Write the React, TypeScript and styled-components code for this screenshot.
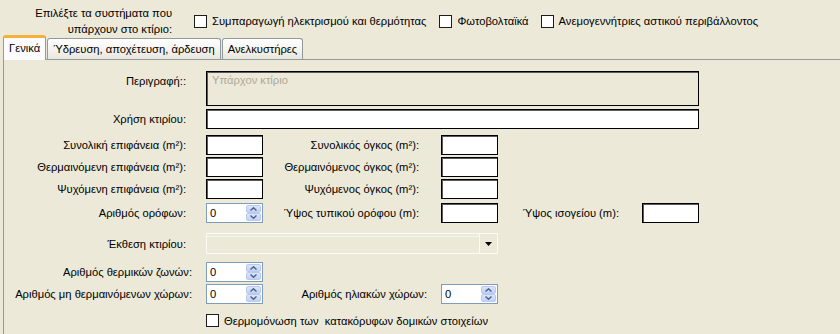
import React from 'react';
import styled, { createGlobalStyle } from 'styled-components';

const GlobalStyle = createGlobalStyle`
  html, body {
    margin: 0;
    padding: 0;
    background: #ece9d8;
  }
  body {
    font-family: "Liberation Sans", Arial, sans-serif;
    font-size: 11.2px;
    color: #000;
  }
`;

const Window = styled.div`
  width: 840px;
  height: 334px;
  overflow: hidden;
  background: #ece9d8;
`;

const Header = styled.div`
  display: flex;
  align-items: center;
  height: 37px;
  padding-top: 5px;
  box-sizing: border-box;
`;

const HeaderLabel = styled.div`
  width: 172px;
  text-align: right;
  line-height: 16px;
  margin-right: 22px;
`;

const CheckItem = styled.label<{ $mr?: number; $ml?: number }>`
  display: flex;
  align-items: center;
  gap: 5px;
  margin-right: ${p => p.$mr ?? 0}px;
  margin-left: ${p => p.$ml ?? 0}px;
  white-space: nowrap;
`;

const CheckBox = styled.span`
  width: 13px;
  height: 13px;
  box-sizing: border-box;
  border: 1px solid #1c1c1c;
  background: #fff;
  flex: none;
`;

const TabStrip = styled.div`
  display: flex;
  align-items: flex-end;
  height: 24px;
  margin: -2px 0 0 3px;
  border-bottom: 1px solid #919b9c;
`;

const Tab = styled.div<{ $active?: boolean }>`
  display: flex;
  align-items: center;
  box-sizing: border-box;
  padding: 0 5px;
  margin-right: 1px;
  white-space: nowrap;
  border: 1px solid #919b9c;
  border-bottom: none;
  border-radius: 3px 3px 0 0;
  height: ${p => (p.$active ? 25 : 21)}px;
  margin-bottom: ${p => (p.$active ? -1 : 0)}px;
  padding-bottom: ${p => (p.$active ? 2 : 0)}px;
  border-top: ${p => (p.$active ? '3px solid #f5b03c' : '1px solid #919b9c')};
  background: ${p =>
    p.$active ? '#fcfcfe' : 'linear-gradient(#ffffff, #f3f2ec 60%, #e8e6dc)'};
`;

const Panel = styled.div`
  margin-left: 3px;
  border-left: 1px solid #919b9c;
  height: 280px;
  padding-top: 11px;
  box-sizing: border-box;
`;

const Row = styled.div<{ $mt: number; $top?: boolean }>`
  display: flex;
  align-items: ${p => (p.$top ? 'flex-start' : 'center')};
  margin-top: ${p => p.$mt}px;
`;

const Label = styled.span<{ $w: number; $pt?: number }>`
  width: ${p => p.$w}px;
  flex: none;
  text-align: right;
  white-space: nowrap;
  padding-top: ${p => p.$pt ?? 0}px;
`;

const TextBox = styled.div<{ $w: number; $ml: number; $h?: number; $disabled?: boolean }>`
  width: ${p => p.$w}px;
  height: ${p => p.$h ?? 20}px;
  margin-left: ${p => p.$ml}px;
  flex: none;
  box-sizing: border-box;
  border: 1px solid #000;
  box-shadow: inset 1px 1px 0 #5a5a5a;
  background: ${p => (p.$disabled ? '#ece9d8' : '#fff')};
  color: #aca899;
  padding: 2px 0 0 5px;
`;

const SpinBox = styled.div<{ $ml: number }>`
  display: flex;
  align-items: stretch;
  width: 57px;
  height: 20px;
  margin-left: ${p => p.$ml}px;
  box-sizing: border-box;
  border: 1px solid #7f9db9;
  background: #fff;
  padding: 1px;
`;

const SpinValue = styled.span`
  flex: 1;
  padding-left: 2px;
  line-height: 16px;
`;

const SpinButtons = styled.div`
  display: flex;
  flex-direction: column;
  width: 15px;
`;

const SpinArrow = styled.div`
  flex: 1;
  display: flex;
  align-items: center;
  justify-content: center;
  background: linear-gradient(#dbe5fb, #c1d1f7);
  border-radius: 2px;
  border: 1px solid #b9c9ef;
  box-sizing: border-box;
`;

const Combo = styled.div<{ $w: number; $ml: number }>`
  display: flex;
  width: ${p => p.$w}px;
  height: 21px;
  margin-left: ${p => p.$ml}px;
  box-sizing: border-box;
  border: 1px solid #fbfaf6;
  background: #ece9d8;
`;

const ComboBody = styled.div`
  flex: 1;
  margin: 2px 0;
  border-top: 1px solid #f5f4ee;
`;

const ComboButton = styled.div`
  width: 17px;
  display: flex;
  align-items: center;
  justify-content: center;
  border-left: 1px solid #fbfaf6;
`;

const Spin: React.FC<{ ml: number }> = ({ ml }) => (
  <SpinBox $ml={ml}>
    <SpinValue>0</SpinValue>
    <SpinButtons>
      <SpinArrow>
        <svg width="7" height="4" viewBox="0 0 7 4">
          <path d="M0.5 3.5 L3.5 0.8 L6.5 3.5" fill="none" stroke="#4d6185" strokeWidth="1.4" />
        </svg>
      </SpinArrow>
      <SpinArrow>
        <svg width="7" height="4" viewBox="0 0 7 4">
          <path d="M0.5 0.5 L3.5 3.2 L6.5 0.5" fill="none" stroke="#4d6185" strokeWidth="1.4" />
        </svg>
      </SpinArrow>
    </SpinButtons>
  </SpinBox>
);

const App: React.FC = () => (
  <Window>
    <GlobalStyle />
    <Header>
      <HeaderLabel>
        Επιλέξτε τα συστήματα που
        <br />
        υπάρχουν στο κτίριο:
      </HeaderLabel>
      <CheckItem $mr={13}>
        <CheckBox />
        Συμπαραγωγή ηλεκτρισμού και θερμότητας
      </CheckItem>
      <CheckItem $mr={12}>
        <CheckBox />
        Φωτοβολταϊκά
      </CheckItem>
      <CheckItem>
        <CheckBox />
        Ανεμογεννήτριες αστικού περιβάλλοντος
      </CheckItem>
    </Header>

    <TabStrip>
      <Tab $active>Γενικά</Tab>
      <Tab>Ύδρευση, αποχέτευση, άρδευση</Tab>
      <Tab>Ανελκυστήρες</Tab>
    </TabStrip>

    <Panel>
      <Row $mt={0} $top>
        <Label $w={182} $pt={4}>Περιγραφή::</Label>
        <TextBox $w={493} $ml={20} $h={35} $disabled>Υπάρχον κτίριο</TextBox>
      </Row>
      <Row $mt={3}>
        <Label $w={182}>Χρήση κτιρίου:</Label>
        <TextBox $w={493} $ml={20} />
      </Row>
      <Row $mt={6}>
        <Label $w={182}>Συνολική επιφάνεια (m²):</Label>
        <TextBox $w={57} $ml={20} />
        <Label $w={156}>Συνολικός όγκος (m²):</Label>
        <TextBox $w={57} $ml={22} />
      </Row>
      <Row $mt={2}>
        <Label $w={182}>Θερμαινόμενη επιφάνεια (m²):</Label>
        <TextBox $w={57} $ml={20} />
        <Label $w={156}>Θερμαινόμενος όγκος (m²):</Label>
        <TextBox $w={57} $ml={22} />
      </Row>
      <Row $mt={2}>
        <Label $w={182}>Ψυχόμενη επιφάνεια (m²):</Label>
        <TextBox $w={57} $ml={20} />
        <Label $w={156}>Ψυχόμενος όγκος (m²):</Label>
        <TextBox $w={57} $ml={22} />
      </Row>
      <Row $mt={4}>
        <Label $w={182}>Αριθμός ορόφων:</Label>
        <Spin ml={20} />
        <Label $w={156}>Ύψος τυπικού ορόφου (m):</Label>
        <TextBox $w={57} $ml={22} />
        <Label $w={121}>Ύψος ισογείου (m):</Label>
        <TextBox $w={57} $ml={23} />
      </Row>
      <Row $mt={10}>
        <Label $w={182}>Έκθεση κτιρίου:</Label>
        <Combo $w={292} $ml={20}>
          <ComboBody />
          <ComboButton>
            <svg width="7" height="4" viewBox="0 0 7 4">
              <path d="M0 0 H7 L3.5 4 Z" fill="#000" />
            </svg>
          </ComboButton>
        </Combo>
      </Row>
      <Row $mt={8}>
        <Label $w={188}>Αριθμός θερμικών ζωνών:</Label>
        <Spin ml={14} />
      </Row>
      <Row $mt={2}>
        <Label $w={188}>Αριθμός μη θερμαινόμενων χώρων:</Label>
        <Spin ml={14} />
        <Label $w={164}>Αριθμός ηλιακών χώρων:</Label>
        <Spin ml={14} />
      </Row>
      <Row $mt={10}>
        <CheckItem $ml={202}>
          <CheckBox />
          Θερμομόνωση των&nbsp; κατακόρυφων δομικών στοιχείων
        </CheckItem>
      </Row>
    </Panel>
  </Window>
);

export default App;
